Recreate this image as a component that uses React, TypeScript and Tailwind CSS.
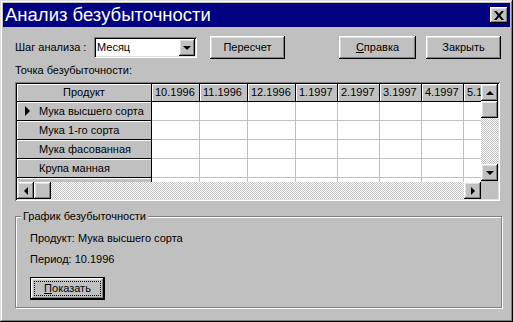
import React from 'react';

const raised =
  'bg-[#c0c0c0] shadow-[inset_-1px_-1px_#000,inset_1px_1px_#fff,inset_-2px_-2px_#808080,inset_2px_2px_#dfdfdf]';
const sunken =
  'shadow-[inset_1px_1px_#808080,inset_-1px_-1px_#fff,inset_2px_2px_#000,inset_-2px_-2px_#dfdfdf]';
const checker =
  'bg-[#c0c0c0] bg-[image:repeating-conic-gradient(#c0c0c0_0%_25%,#ffffff_0%_50%)] bg-[length:2px_2px]';

type Dir = 'up' | 'down' | 'left' | 'right';

const Arrow: React.FC<{ dir: Dir; size?: number }> = ({ dir, size = 4 }) => {
  const s = size;
  const pts: Record<Dir, string> = {
    up: `0,${s} ${s * 2},${s} ${s},0`,
    down: `0,0 ${s * 2},0 ${s},${s}`,
    left: `${s},0 ${s},${s * 2} 0,${s}`,
    right: `0,0 0,${s * 2} ${s},${s}`,
  };
  const vertical = dir === 'up' || dir === 'down';
  return (
    <svg width={vertical ? s * 2 : s} height={vertical ? s : s * 2} className="block">
      <polygon points={pts[dir]} fill="#000" />
    </svg>
  );
};

const ScrollBtn: React.FC<{ dir: Dir }> = ({ dir }) => (
  <div className={`${raised} w-[17px] h-[17px] shrink-0 flex items-center justify-center`}>
    <Arrow dir={dir} size={4} />
  </div>
);

const Button: React.FC<{ w: string; children: React.ReactNode }> = ({ w, children }) => (
  <button className={`${raised} ${w} h-[23px] shrink-0 flex items-center justify-center text-[11px]`}>
    {children}
  </button>
);

const dates = ['10.1996', '11.1996', '12.1996', '1.1997', '2.1997', '3.1997', '4.1997', '5.1997'];
const dateW = ['w-[48px]', 'w-[48px]', 'w-[48px]', 'w-[42px]', 'w-[42px]', 'w-[42px]', 'w-[42px]', 'w-[42px]'];
const products = ['Мука высшего сорта', 'Мука 1-го сорта', 'Мука фасованная', 'Крупа манная', ''];

const fixedCell =
  'bg-[#c0c0c0] border-r border-b border-black shadow-[inset_1px_1px_#fff] shrink-0 flex items-center';

export default function App() {
  return (
    <div className="w-[513px] h-[322px] bg-[#c0c0c0] p-[3px] font-['Liberation_Sans',Arial,sans-serif] text-[11px] text-black shadow-[inset_-1px_-1px_#000,inset_1px_1px_#dfdfdf,inset_-2px_-2px_#808080,inset_2px_2px_#fff] overflow-hidden">
      {/* title bar */}
      <div className="h-[24px] bg-[#000080] flex items-center justify-between pl-[2px] pr-[2px]">
        <span className="text-white text-[18.5px] leading-none">Анализ безубыточности</span>
        <button className={`${raised} w-[18px] h-[16px] flex items-center justify-center`}>
          <svg width="10" height="9" viewBox="0 0 10 9">
            <path d="M0 0h2.5l2.5 3 2.5-3H10L6.4 4.5 10 9H7.5L5 6 2.5 9H0l3.6-4.5z" fill="#000" />
          </svg>
        </button>
      </div>

      <div className="pl-[12px]">
        {/* toolbar row */}
        <div className="mt-[9px] h-[23px] flex items-center">
          <span className="w-[79px] shrink-0">Шаг анализа :</span>
          <div className={`bg-white ${sunken} w-[103px] h-[21px] shrink-0 flex items-center justify-between pl-[3px] pr-[2px]`}>
            <span>Месяц</span>
            <div className={`${raised} w-[16px] h-[17px] flex items-center justify-center`}>
              <Arrow dir="down" size={4} />
            </div>
          </div>
          <div className="ml-[13px]">
            <Button w="w-[75px]">Пересчет</Button>
          </div>
          <div className="ml-[54px]">
            <Button w="w-[77px]">
              <span>
                <span className="underline">С</span>правка
              </span>
            </Button>
          </div>
          <div className="ml-[10px]">
            <Button w="w-[75px]">Закрыть</Button>
          </div>
        </div>

        <div className="h-[23px] flex items-center">Точка безубыточности:</div>

        {/* grid */}
        <div className={`${sunken} bg-[#c0c0c0] w-[485px] h-[119px] p-[2px]`}>
          <div className="flex h-[115px]">
            <div className="flex flex-col w-[464px]">
              <div className="h-[98px] overflow-hidden bg-white">
                <div className="flex h-[18px]">
                  <div className={`${fixedCell} w-[135px] justify-center`}>Продукт</div>
                  {dates.map((d, i) => (
                    <div key={d} className={`${fixedCell} ${dateW[i]} pl-[3px] whitespace-nowrap overflow-hidden`}>
                      {d}
                    </div>
                  ))}
                </div>
                {products.map((p, r) => (
                  <div key={r} className="flex h-[19px]">
                    <div className={`${fixedCell} w-[135px] relative pl-[22px]`}>
                      {r === 0 && (
                        <span className="absolute left-[8px] top-[4px]">
                          <Arrow dir="right" size={5} />
                        </span>
                      )}
                      {p}
                    </div>
                    {dates.map((d, i) => (
                      <div key={d} className={`${dateW[i]} shrink-0 border-r border-b border-[#c0c0c0]`} />
                    ))}
                  </div>
                ))}
              </div>
              {/* horizontal scrollbar */}
              <div className="flex h-[17px]">
                <ScrollBtn dir="left" />
                <div className={`${raised} w-[17px] h-[17px] shrink-0`} />
                <div className={`${checker} flex-1`} />
                <ScrollBtn dir="right" />
              </div>
            </div>
            {/* vertical scrollbar */}
            <div className="flex flex-col w-[17px]">
              <ScrollBtn dir="up" />
              <div className={`${raised} w-[17px] h-[17px] shrink-0`} />
              <div className={`${checker} flex-1`} />
              <ScrollBtn dir="down" />
              <div className="h-[18px] bg-[#c0c0c0]" />
            </div>
          </div>
        </div>

        {/* group box */}
        <div className="relative mt-[15px] w-[487px] h-[92px] border border-[#808080] shadow-[inset_1px_1px_#fff,1px_1px_#fff] pl-[14px] pt-[14px]">
          <span className="absolute -top-[8px] left-[5px] bg-[#c0c0c0] px-[2px] leading-[14px]">
            График безубыточности
          </span>
          <div className="h-[15px] flex items-center">Продукт: Мука высшего сорта</div>
          <div className="mt-[6px] h-[15px] flex items-center">Период: 10.1996</div>
          <div className="mt-[10px] w-[75px] h-[23px] border border-black">
            <div className={`${raised} w-full h-full flex items-center justify-center p-[3px]`}>
              <div className="w-full h-full border border-dotted border-black flex items-center justify-center">
                <span>
                  <span className="underline">П</span>оказать
                </span>
              </div>
            </div>
          </div>
        </div>
      </div>
    </div>
  );
}
